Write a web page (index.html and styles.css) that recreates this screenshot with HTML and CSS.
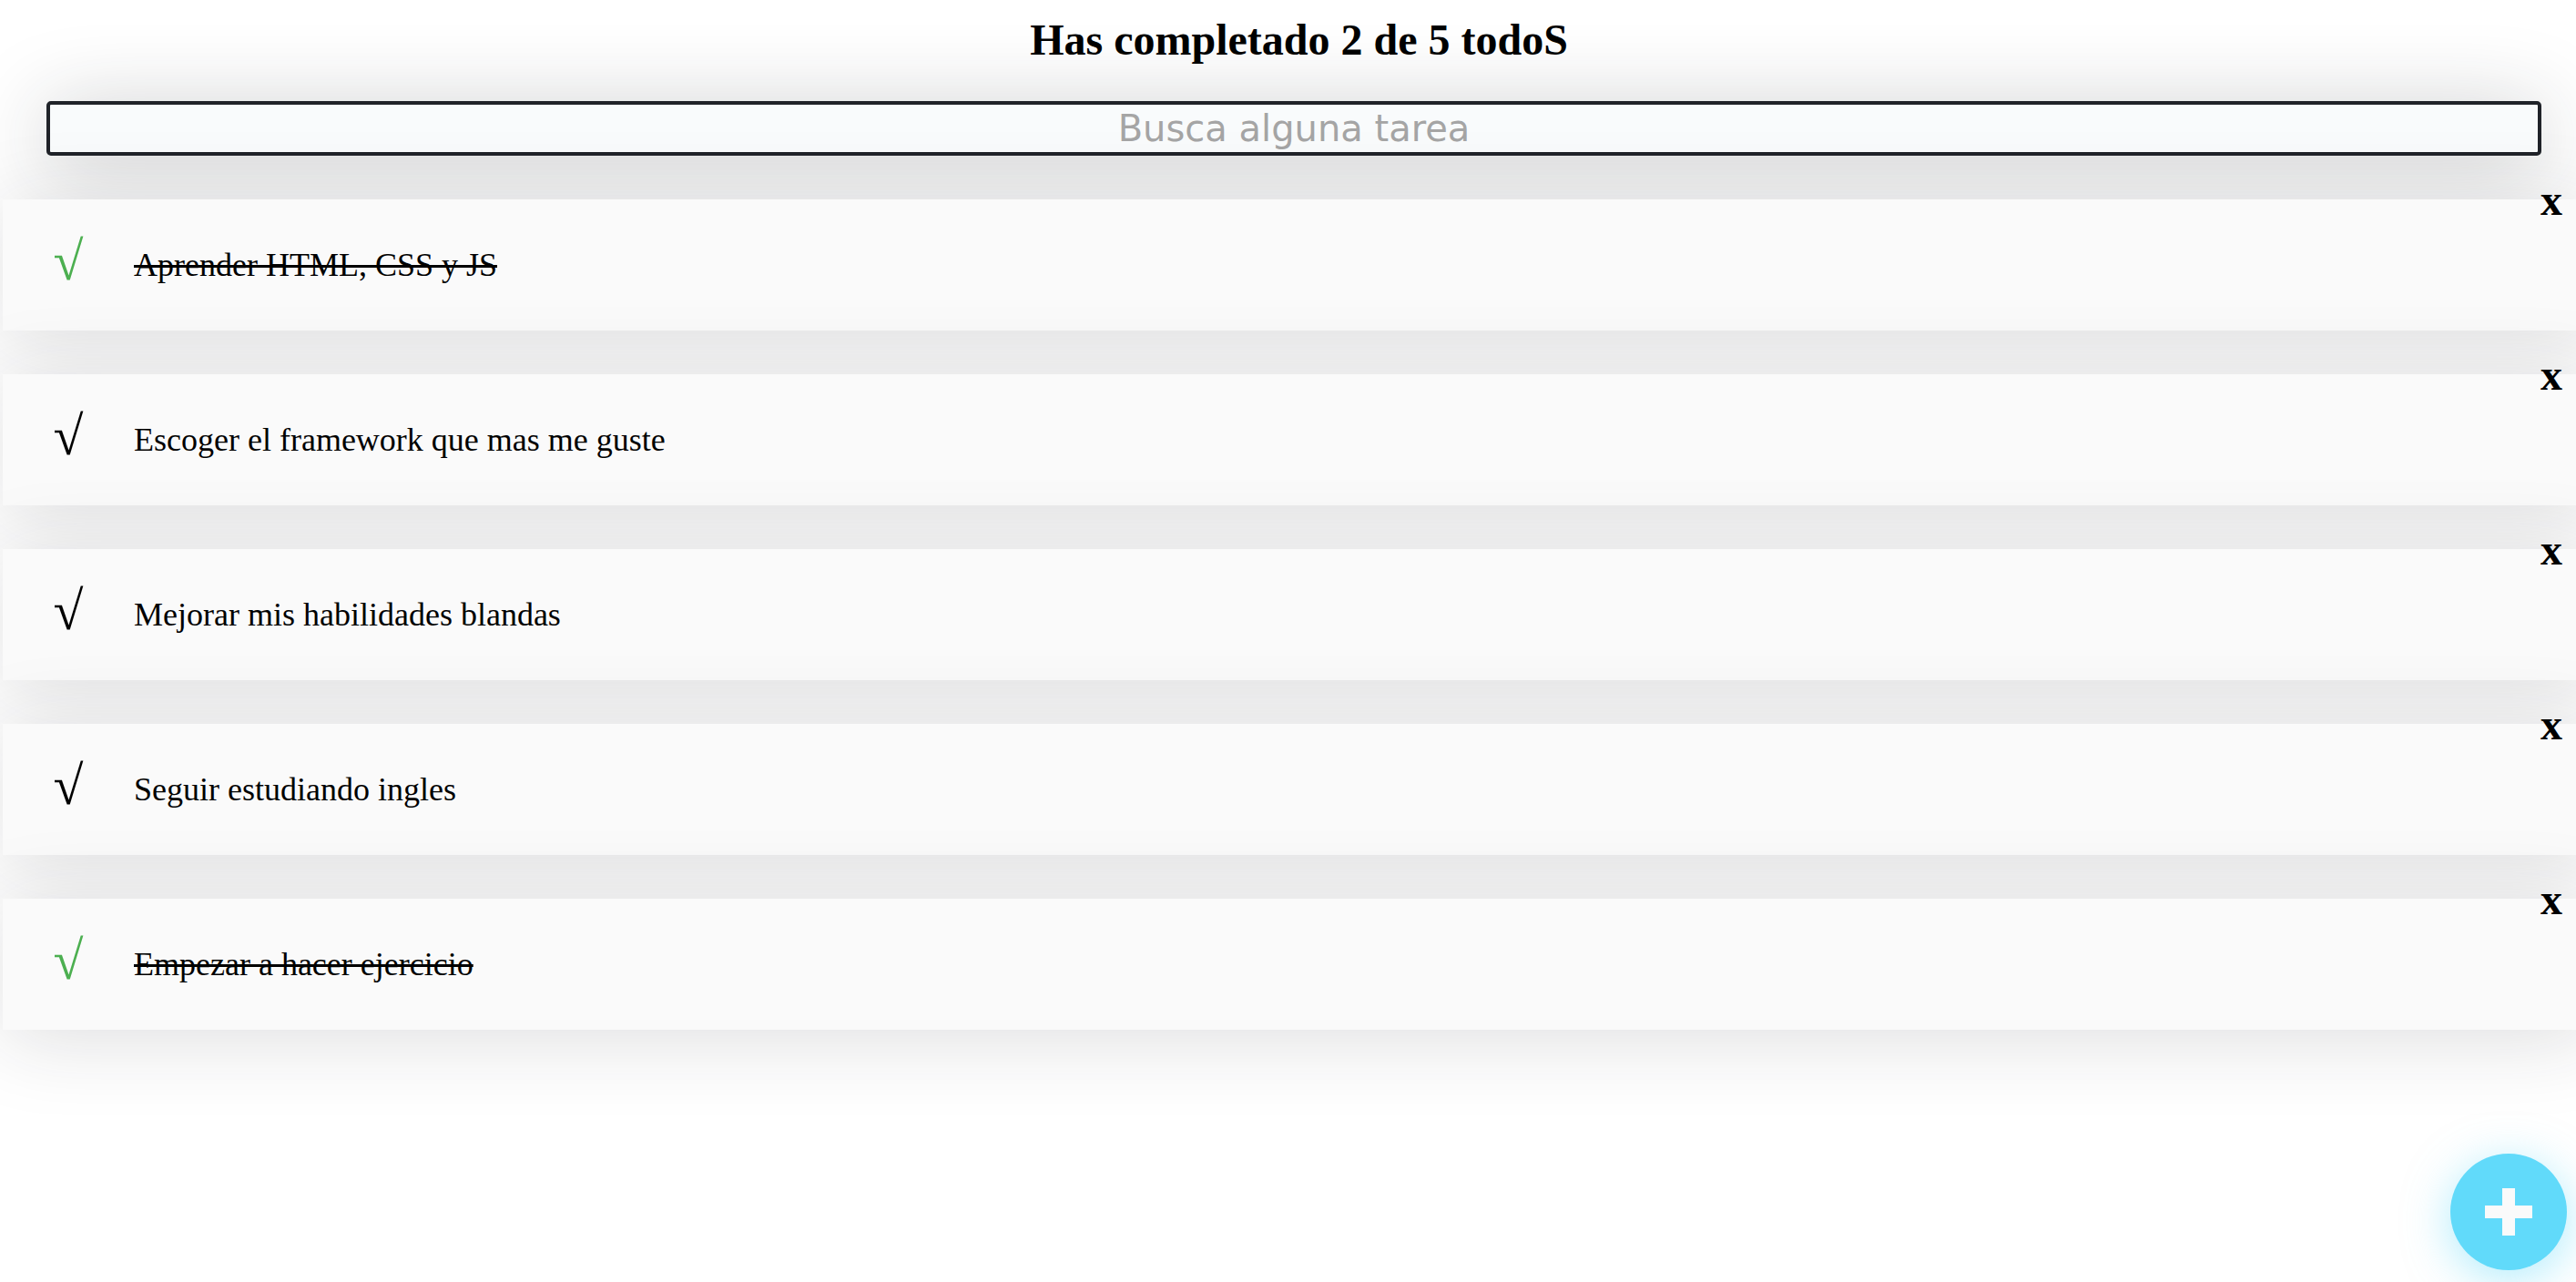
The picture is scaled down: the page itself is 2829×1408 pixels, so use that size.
FILE: index.html
```html
<!DOCTYPE html>
<html lang="es">
<head>
<meta charset="utf-8">
<title>Todo</title>
<link rel="stylesheet" href="styles.css">
</head>
<body>
<div class="app">
  <h1 class="title">Has completado 2 de 5 todoS</h1>
  <input class="search" type="text" placeholder="Busca alguna tarea">
  <ul class="list">
    <li class="item">
      <span class="check check--done">√</span>
      <p class="text text--done">Aprender HTML, CSS y JS</p>
      <span class="delete">x</span>
    </li>
    <li class="item">
      <span class="check">√</span>
      <p class="text">Escoger el framework que mas me guste</p>
      <span class="delete">x</span>
    </li>
    <li class="item">
      <span class="check">√</span>
      <p class="text">Mejorar mis habilidades blandas</p>
      <span class="delete">x</span>
    </li>
    <li class="item">
      <span class="check">√</span>
      <p class="text">Seguir estudiando ingles</p>
      <span class="delete">x</span>
    </li>
    <li class="item">
      <span class="check check--done">√</span>
      <p class="text text--done">Empezar a hacer ejercicio</p>
      <span class="delete">x</span>
    </li>
  </ul>
</div>
<button class="create" aria-label="Crear tarea"><span class="plus"></span></button>
</body>
</html>
```

FILE: styles.css
```css
html, body {
  margin: 0;
  padding: 0;
  background: #ffffff;
  overflow: hidden;
  height: 100%;
}

body {
  font-family: "Liberation Serif", "Times New Roman", serif;
  color: #000;
}

.app {
  width: 2847px;
  margin-left: 3px;
}

.title {
  margin: 16px 0 40px;
  text-align: center;
  font-size: 48px;
  font-weight: bold;
  line-height: 55px;
}

.search {
  display: block;
  box-sizing: border-box;
  margin: 0 0 0 48px;
  width: 2740px;
  height: 60px;
  background: #F9FBFC;
  border: 4px solid #202329;
  border-radius: 5px;
  font-family: "DejaVu Sans", sans-serif;
  font-size: 40px;
  text-align: center;
  color: #1E1E1F;
  box-shadow: 0 10px 90px rgba(32, 35, 41, 0.25);
  outline: none;
  padding: 0;
}

.search::placeholder {
  color: #A5A5A5;
}

.list {
  list-style: none;
  margin: 48px 0 0;
  padding: 0;
}

.item {
  position: relative;
  display: flex;
  align-items: center;
  background: #FAFAFA;
  margin-bottom: 48px;
  box-shadow: 0 10px 90px rgba(32, 35, 41, 0.15);
}

.check {
  display: flex;
  justify-content: center;
  align-items: center;
  width: 96px;
  height: 96px;
  margin: 0 0 8px 24px;
  font-size: 60px;
  line-height: 1;
  font-weight: bold;
  flex: none;
}

.check--done {
  color: #4caf50;
}

.text {
  margin: 48px 0 48px 24px;
  font-size: 36px;
  line-height: 48px;
  font-weight: 400;
}

.text--done {
  text-decoration: line-through;
}

.delete {
  position: absolute;
  top: -48px;
  right: 0;
  display: flex;
  justify-content: center;
  align-items: center;
  width: 96px;
  height: 96px;
  font-size: 48px;
  font-weight: bold;
}

.create {
  position: fixed;
  right: 10px;
  bottom: 13px;
  width: 128px;
  height: 128px;
  border: none;
  border-radius: 50%;
  background: #61DAFA;
  box-shadow: 0 10px 50px rgba(97, 218, 250, 0.5);
  padding: 0;
  display: flex;
  justify-content: center;
  align-items: center;
}

.plus {
  position: relative;
  width: 52px;
  height: 52px;
}

.plus::before,
.plus::after {
  content: "";
  position: absolute;
  background: #FAFAFA;
}

.plus::before {
  left: 0;
  top: 19px;
  width: 52px;
  height: 14px;
}

.plus::after {
  left: 19px;
  top: 0;
  width: 14px;
  height: 52px;
}
```
